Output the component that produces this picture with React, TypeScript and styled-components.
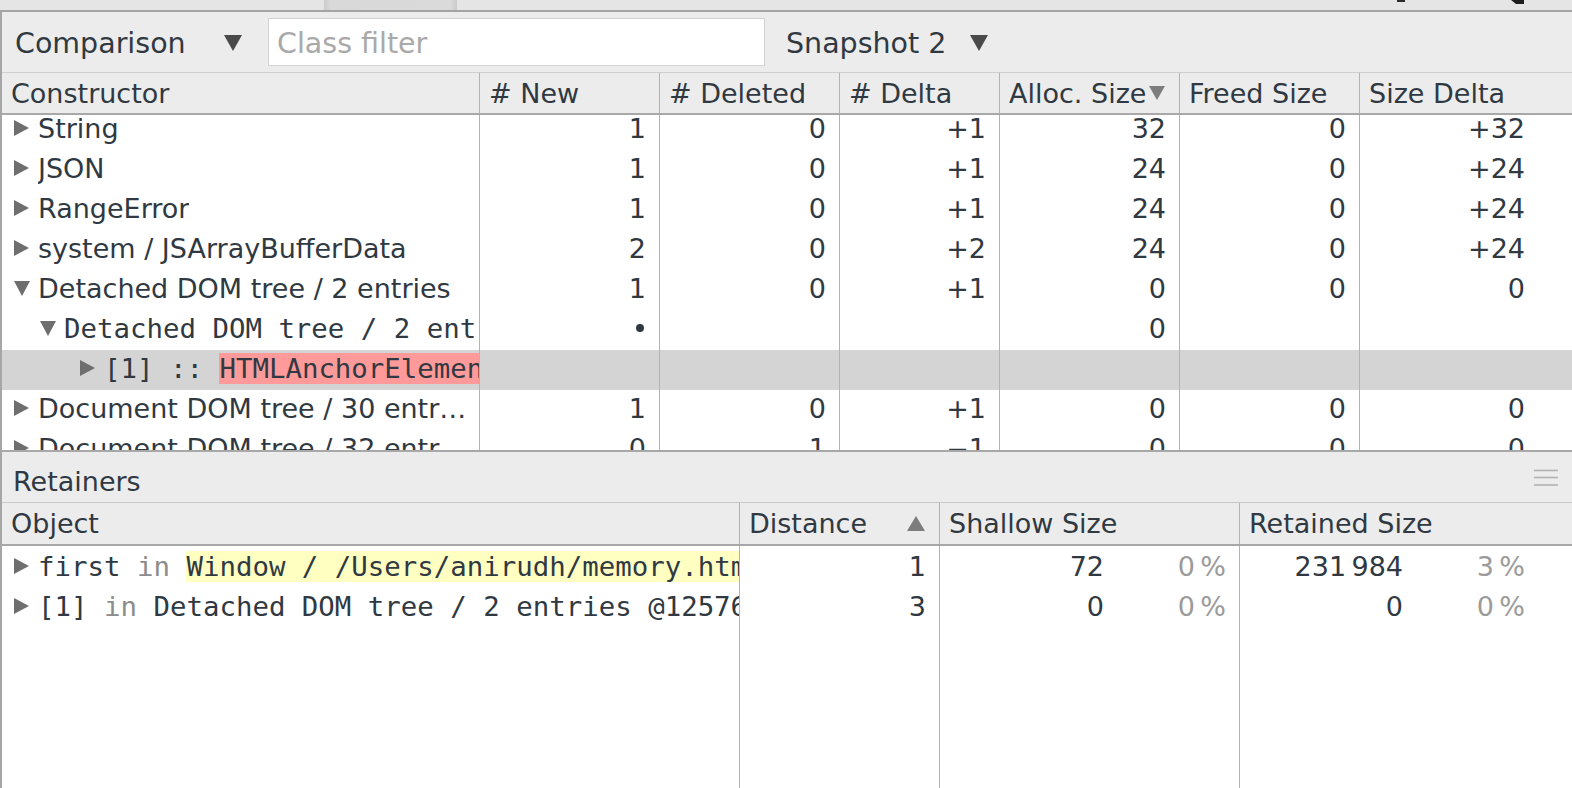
import React from "react";
import styled, { createGlobalStyle, css } from "styled-components";

const SANS = `"DejaVu Sans", "Liberation Sans", sans-serif`;
const MONO = `"DejaVu Sans Mono", "Liberation Mono", monospace`;
const TEXT = "#303942";
const LINE = "#b3b3b3";
const RULE = "#a8a8a8";
const PANEL = "#ececec";

const TOP_COLS = "478px 180px 180px 160px 180px 180px 1fr";
const RET_COLS = "738px 200px 300px 1fr";

const GlobalStyle = createGlobalStyle`
  html, body { margin: 0; padding: 0; background: #fff; overflow: hidden; }
  body { font-family: ${SANS}; color: ${TEXT}; }
  *, *::before, *::after { box-sizing: border-box; }
`;

const Page = styled.div`
  width: 1572px;
  height: 788px;
  display: flex;
  flex-direction: column;
  overflow: hidden;
`;

const TopStrip = styled.div`
  height: 10px;
  flex: none;
  display: flex;
  align-items: flex-start;
  background: #e5e5e5;
`;

const StripTab = styled.div`
  margin-left: 324px;
  width: 133px;
  height: 10px;
  background: linear-gradient(to right, #cbcbcb, #d9d9d9 5%, #dadada 95%, #cbcbcb);
`;

const StripMarks = styled.div`
  margin-left: auto;
  margin-right: 48px;
  display: flex;
  align-items: flex-start;
  gap: 106px;
`;

const StripBar = styled.span`
  width: 8px;
  height: 2px;
  background: #2a2a2a;
`;

const StripWedge = styled.span`
  width: 0;
  height: 0;
  border-left: 5px solid transparent;
  border-top: 4px solid #1e1e1e;
  border-right: 8px solid #1e1e1e;
`;

const Main = styled.div`
  flex: 1;
  display: flex;
  flex-direction: column;
  border-top: 2px solid #a4a4a4;
  border-left: 2px solid #a6a6a6;
  min-height: 0;
`;

const Toolbar = styled.div`
  height: 61px;
  flex: none;
  display: flex;
  align-items: center;
  background: ${PANEL};
  border-bottom: 1px solid #cfcfcf;
`;

const Select = styled.div<{ $w: number; $pl: number; $ml?: number }>`
  width: ${(p) => p.$w}px;
  margin-left: ${(p) => p.$ml ?? 0}px;
  padding: 2px 16px 0 ${(p) => p.$pl}px;
  display: flex;
  align-items: center;
  justify-content: space-between;
  font-size: 28.5px;
  color: ${TEXT};
  white-space: nowrap;
`;

const Caret = styled.span<{ $color?: string; $up?: boolean; $size?: number }>`
  flex: none;
  width: 0;
  height: 0;
  border-left: ${(p) => (p.$size ?? 19) / 2}px solid transparent;
  border-right: ${(p) => (p.$size ?? 19) / 2}px solid transparent;
  ${(p) =>
    p.$up
      ? css`border-bottom: ${(p.$size ?? 19) * 0.85}px solid ${p.$color ?? "#4a4a4a"};`
      : css`border-top: ${(p.$size ?? 19) * 0.85}px solid ${p.$color ?? "#4a4a4a"};`}
`;

const FilterInput = styled.input`
  margin-left: 10px;
  width: 497px;
  height: 48px;
  border: 1px solid #d4d4d4;
  background: #fff;
  padding: 2px 8px 0;
  font-family: ${SANS};
  font-size: 28.5px;
  color: ${TEXT};
  outline: none;
  &::placeholder { color: #a9a9a9; }
`;

const Grid = styled.div<{ $cols: string }>`
  display: grid;
  grid-template-columns: ${(p) => p.$cols};
`;

const HeaderRow = styled(Grid)<{ $h: number }>`
  height: ${(p) => p.$h}px;
  flex: none;
  background: ${PANEL};
  border-bottom: 2px solid ${RULE};
`;

const HeaderCell = styled.div`
  display: flex;
  align-items: center;
  padding: 0 14px 0 9px;
  font-size: 27px;
  color: ${TEXT};
  white-space: nowrap;
  overflow: hidden;
  border-right: 1px solid ${LINE};
  &:last-child { border-right: none; }
`;

const SortMark = styled.span`
  margin-left: auto;
  display: flex;
`;

const Body = styled.div<{ $h?: number }>`
  ${(p) => (p.$h ? css`height: ${p.$h}px; flex: none;` : css`flex: 1;`)}
  display: flex;
  flex-direction: column;
  overflow: hidden;
  min-height: 0;
`;

const Scrolled = styled.div`
  margin-top: -5px;
  display: flex;
  flex-direction: column;
`;

const Row = styled(Grid)<{ $selected?: boolean; $fill?: boolean; $lift?: boolean }>`
  height: 40px;
  flex: none;
  background: ${(p) => (p.$selected ? "#d4d4d4" : "#fff")};
  ${(p) => p.$fill && css`flex: 1; height: auto;`}
  ${(p) => p.$lift && css`& > * { padding-bottom: 4px; }`}
`;

const Cell = styled.div<{ $last?: boolean }>`
  display: flex;
  align-items: center;
  justify-content: flex-end;
  padding-right: ${(p) => (p.$last ? 47 : 13)}px;
  font-size: 27px;
  color: ${TEXT};
  white-space: nowrap;
  overflow: hidden;
  border-right: 1px solid ${LINE};
  &:last-child { border-right: none; }
`;

const TreeCell = styled.div<{ $indent: number }>`
  display: flex;
  align-items: center;
  padding-left: ${(p) => p.$indent}px;
  overflow: hidden;
  white-space: nowrap;
  border-right: 1px solid ${LINE};
  min-width: 0;
`;

const TriBox = styled.span`
  flex: none;
  width: 24px;
  display: flex;
  align-items: center;
`;

const Tri = styled.span<{ $open?: boolean }>`
  width: 0;
  height: 0;
  ${(p) =>
    p.$open
      ? css`
          border-left: 8.5px solid transparent;
          border-right: 8.5px solid transparent;
          border-top: 15px solid #6e6e6e;
        `
      : css`
          border-top: 8.5px solid transparent;
          border-bottom: 8.5px solid transparent;
          border-left: 15px solid #6e6e6e;
        `}
`;

const Label = styled.span<{ $mono?: boolean }>`
  font-family: ${(p) => (p.$mono ? MONO : SANS)};
  font-size: ${(p) => (p.$mono ? "27.4px" : "27px")};
  color: ${TEXT};
  overflow: hidden;
  white-space: nowrap;
  min-width: 0;
  ${(p) => !p.$mono && css`text-overflow: ellipsis; margin-right: 10px;`}
`;

const Dim = styled.span`
  color: #8c8c8c;
`;

const Mark = styled.span<{ $bg: string }>`
  background: ${(p) => p.$bg};
  padding: 3px 0;
`;

const Bullet = styled.span`
  width: 8px;
  height: 8px;
  border-radius: 50%;
  background: ${TEXT};
  margin-right: 2px;
`;

const Pct = styled.span`
  width: 122px;
  text-align: right;
  color: #9b9b9b;
  flex: none;
`;

const RetainersBar = styled.div`
  height: 53px;
  flex: none;
  display: flex;
  align-items: center;
  justify-content: space-between;
  padding: 0 14px 0 11px;
  background: ${PANEL};
  border-top: 2px solid ${RULE};
  border-bottom: 1px solid #c9c9c9;
  font-size: 27px;
  color: ${TEXT};
`;

const BarTitle = styled.span`
  padding-top: 8px;
`;

const MenuIcon = styled.svg`
  margin-top: 2px;
`;

const Menu = () => (
  <MenuIcon width="24" height="18" viewBox="0 0 24 18">
    <g stroke="#b2b2b2" strokeWidth="1.6">
      <line x1="0" y1="1.5" x2="24" y2="1.5" />
      <line x1="0" y1="8.5" x2="24" y2="8.5" />
      <line x1="0" y1="16" x2="24" y2="16" />
    </g>
  </MenuIcon>
);

type TopRow = {
  indent: number;
  open?: boolean;
  mono?: boolean;
  label: React.ReactNode;
  vals: React.ReactNode[];
  selected?: boolean;
};

const topRows: TopRow[] = [
  { indent: 12, label: "String", vals: ["1", "0", "+1", "32", "0", "+32"] },
  { indent: 12, label: "JSON", vals: ["1", "0", "+1", "24", "0", "+24"] },
  { indent: 12, label: "RangeError", vals: ["1", "0", "+1", "24", "0", "+24"] },
  { indent: 12, label: "system / JSArrayBufferData", vals: ["2", "0", "+2", "24", "0", "+24"] },
  { indent: 12, open: true, label: "Detached DOM tree / 2 entries", vals: ["1", "0", "+1", "0", "0", "0"] },
  {
    indent: 38,
    open: true,
    mono: true,
    label: "Detached DOM tree / 2 entries @12576",
    vals: [<Bullet key="b" />, "", "", "0", "", ""],
  },
  {
    indent: 78,
    mono: true,
    selected: true,
    label: (
      <>
        [1] :: <Mark $bg="#ff9a9a">HTMLAnchorElement @12571</Mark>
      </>
    ),
    vals: ["", "", "", "", "", ""],
  },
  { indent: 12, label: "Document DOM tree / 30 entries", vals: ["1", "0", "+1", "0", "0", "0"] },
  { indent: 12, label: "Document DOM tree / 32 entries", vals: ["0", "1", "\u22121", "0", "0", "0"] },
];

type RetRow = {
  label: React.ReactNode;
  distance: string;
  shallow: string;
  shallowPct: string;
  retained: string;
  retainedPct: string;
};

const retRows: RetRow[] = [
  {
    label: (
      <>
        first <Dim>in</Dim> <Mark $bg="#ffffc2">Window / /Users/anirudh/memory.html</Mark>
      </>
    ),
    distance: "1",
    shallow: "72",
    shallowPct: "0\u2009%",
    retained: "231\u2009984",
    retainedPct: "3\u2009%",
  },
  {
    label: (
      <>
        [1] <Dim>in</Dim> Detached DOM tree / 2 entries @12576
      </>
    ),
    distance: "3",
    shallow: "0",
    shallowPct: "0\u2009%",
    retained: "0",
    retainedPct: "0\u2009%",
  },
];

const topHeaders = ["Constructor", "# New", "# Deleted", "# Delta", "Alloc. Size", "Freed Size", "Size Delta"];

export default function App() {
  return (
    <Page>
      <GlobalStyle />
      <TopStrip>
        <StripTab />
        <StripMarks>
          <StripBar />
          <StripWedge />
        </StripMarks>
      </TopStrip>
      <Main>
        <Toolbar>
          <Select $w={256} $pl={13}>
            Comparison
            <Caret />
          </Select>
          <FilterInput placeholder="Class filter" />
          <Select $w={229} $pl={11} $ml={10}>
            Snapshot 2
            <Caret />
          </Select>
        </Toolbar>

        <HeaderRow $cols={TOP_COLS} $h={42}>
          {topHeaders.map((h) => (
            <HeaderCell key={h}>
              {h}
              {h === "Alloc. Size" && (
                <SortMark>
                  <Caret $color="#7d7d7d" $size={17} />
                </SortMark>
              )}
            </HeaderCell>
          ))}
        </HeaderRow>

        <Body $h={335}>
          <Scrolled>
            {topRows.map((r, i) => (
              <Row key={i} $cols={TOP_COLS} $selected={r.selected} $lift>
                <TreeCell $indent={r.indent}>
                  <TriBox>
                    <Tri $open={r.open} />
                  </TriBox>
                  <Label $mono={r.mono}>{r.label}</Label>
                </TreeCell>
                {r.vals.map((v, j) => (
                  <Cell key={j} $last={j === r.vals.length - 1}>
                    {v}
                  </Cell>
                ))}
              </Row>
            ))}
          </Scrolled>
        </Body>

        <RetainersBar>
          <BarTitle>Retainers</BarTitle>
          <Menu />
        </RetainersBar>

        <HeaderRow $cols={RET_COLS} $h={43}>
          <HeaderCell>Object</HeaderCell>
          <HeaderCell>
            Distance
            <SortMark>
              <Caret $up $color="#7d7d7d" $size={18} />
            </SortMark>
          </HeaderCell>
          <HeaderCell>Shallow Size</HeaderCell>
          <HeaderCell>Retained Size</HeaderCell>
        </HeaderRow>

        <Body>
          {retRows.map((r, i) => (
            <Row key={i} $cols={RET_COLS}>
              <TreeCell $indent={12}>
                <TriBox>
                  <Tri />
                </TriBox>
                <Label $mono>{r.label}</Label>
              </TreeCell>
              <Cell>{r.distance}</Cell>
              <Cell>
                {r.shallow}
                <Pct>{r.shallowPct}</Pct>
              </Cell>
              <Cell $last>
                {r.retained}
                <Pct>{r.retainedPct}</Pct>
              </Cell>
            </Row>
          ))}
          <Row $cols={RET_COLS} $fill>
            <TreeCell $indent={12} />
            <Cell />
            <Cell />
            <Cell $last />
          </Row>
        </Body>
      </Main>
    </Page>
  );
}
